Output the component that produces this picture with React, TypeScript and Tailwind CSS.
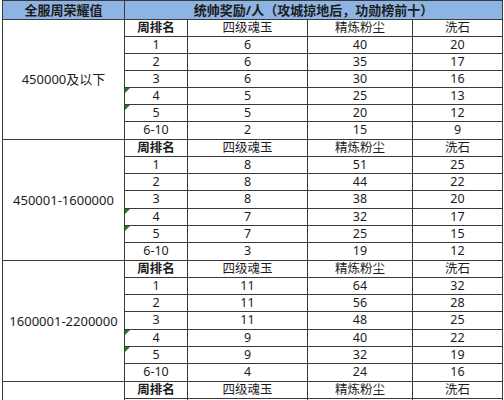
import React from 'react';

type Row = [string, string, string, string];

const groups: { label: string; rows: Row[] }[] = [
  {
    label: '450000及以下',
    rows: [
      ['1', '6', '40', '20'],
      ['2', '6', '35', '17'],
      ['3', '6', '30', '16'],
      ['4', '5', '25', '13'],
      ['5', '5', '20', '12'],
      ['6-10', '2', '15', '9'],
    ],
  },
  {
    label: '450001-1600000',
    rows: [
      ['1', '8', '51', '25'],
      ['2', '8', '44', '22'],
      ['3', '8', '38', '20'],
      ['4', '7', '32', '17'],
      ['5', '7', '25', '15'],
      ['6-10', '3', '19', '12'],
    ],
  },
  {
    label: '1600001-2200000',
    rows: [
      ['1', '11', '64', '32'],
      ['2', '11', '56', '28'],
      ['3', '11', '48', '25'],
      ['4', '9', '40', '22'],
      ['5', '9', '32', '19'],
      ['6-10', '4', '24', '16'],
    ],
  },
  {
    label: '2200001及以上',
    rows: [
      ['1', '14', '80', '40'],
      ['2', '14', '70', '35'],
    ],
  },
];

const line = 'border-[#3a3a3a]';
const widths = ['w-[63px]', 'w-[120px]', 'w-[105px]', 'w-[90px]'];

function Cells({ cells, head, flag }: { cells: string[]; head?: boolean; flag?: boolean }) {
  return (
    <>
      {cells.map((c, i) => (
        <div
          key={i}
          className={`relative flex items-center justify-center overflow-hidden border-r ${line} ${widths[i]} ${head && i === 0 ? 'font-bold' : ''}`}
        >
          {flag && i === 0 && (
            <span className="absolute left-0 top-0 h-0 w-0 border-t-[5px] border-r-[5px] border-t-[#1f7a1f] border-r-transparent" />
          )}
          {c}
        </div>
      ))}
    </>
  );
}

export default function App() {
  return (
    <div
      className="h-[400px] w-[504px] overflow-hidden bg-white text-[12.5px] leading-none text-[#1c1c1c]"
      style={{ fontFamily: '"Noto Sans", "Noto Sans CJK SC", sans-serif' }}
    >
      <div className={`ml-[2px] w-[501px] border-l border-t ${line}`}>
        {/* header */}
        <div className={`flex h-[19px] border-b ${line} bg-[#8db4e2] text-[13px] font-bold`}>
          <div className={`flex w-[122px] items-center justify-center border-r ${line}`}>全服周荣耀值</div>
          <div className={`flex w-[378px] items-center justify-center border-r ${line}`}>
            统帅奖励/人（攻城掠地后，功勋榜前十）
          </div>
        </div>

        {groups.map((g, gi) => (
          <div key={gi} className={`flex border-b ${line}`}>
            <div className={`flex w-[122px] items-center justify-center border-r ${line} text-[13px]`}>{g.label}</div>
            <div className="flex flex-col">
              <div className={`flex h-[17px] border-b ${line}`}>
                <Cells cells={['周排名', '四级魂玉', '精炼粉尘', '洗石']} head />
              </div>
              {g.rows.map((r, ri) => (
                <div
                  key={ri}
                  className={`flex ${gi > 0 && ri === 2 ? 'h-[18px]' : 'h-[17px]'} ${ri < g.rows.length - 1 ? `border-b ${line}` : ''}`}
                >
                  <Cells cells={r} flag={ri === 3 || ri === 4} />
                </div>
              ))}
            </div>
          </div>
        ))}
      </div>
    </div>
  );
}
